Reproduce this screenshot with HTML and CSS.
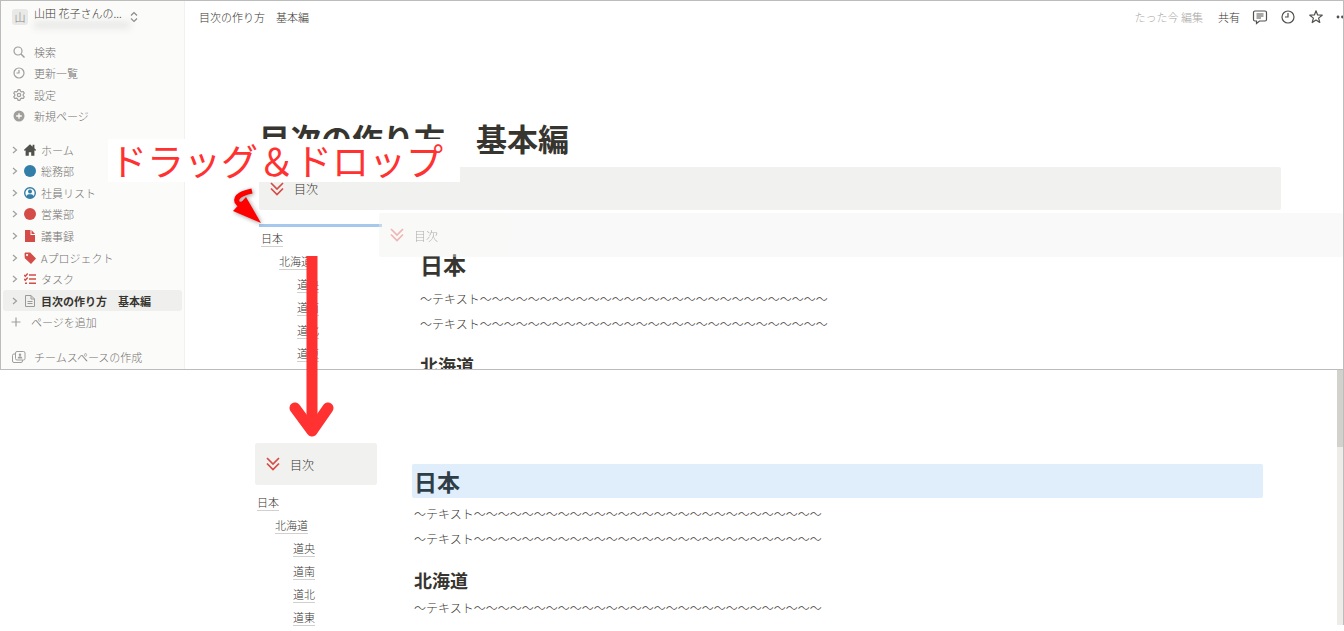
FILE: index.html
```html
<!DOCTYPE html>
<html lang="ja">
<head>
  <meta charset="UTF-8" />
  <meta name="viewport" content="width=device-width, initial-scale=1.0" />
  <title>目次の作り方　基本編</title>
  <link rel="stylesheet" href="styles.css">
</head>
<body>
  <svg class="defs" width="0" height="0" aria-hidden="true">
    <symbol id="chevrons" viewBox="0 0 14 14">
      <path d="M1 1l6 6 6-6M1 6.500l6 6 6-6" fill="none" stroke="currentColor" stroke-width="1.700"/>
    </symbol>
    <symbol id="arrow" viewBox="0 0 8 8">
      <path d="M2 1l3.500 3L2 7" fill="none" stroke="currentColor" stroke-width="1.200"/>
    </symbol>
  </svg>

  <!-- before -->
  <section class="window">
    <aside class="sidebar">
      <button class="workspace" type="button">
        <span class="avatar">山</span>
        <span class="workspace-name">山田 花子さんの...<span class="masked"></span></span>
        <svg class="updown" width="8" height="12" viewBox="0 0 8 12" fill="none" stroke="#8a8a86" stroke-width="1.200"><path d="M1 4.500L4 1.500l3 3M1 7.500l3 3 3-3"/></svg>
      </button>

      <ul class="menu">
        <li><a href="#"><svg width="12" height="12" viewBox="0 0 12 12" fill="none" stroke="currentColor" stroke-width="1.200"><circle cx="5" cy="5" r="4"/><path d="M8 8l3.500 3.500" stroke-width="1.500"/></svg>検索</a></li>
        <li><a href="#"><svg width="12" height="12" viewBox="0 0 12 12" fill="none" stroke="currentColor" stroke-width="1.200"><circle cx="6" cy="6" r="5"/><path d="M6 3v3H3.500"/></svg>更新一覧</a></li>
        <li><a href="#"><svg width="12" height="12" viewBox="0 0 12 12" fill="none" stroke="currentColor" stroke-width="1.200" stroke-linejoin="round"><path d="M5 .7h2l.5 1.500 1.200.7 1.600-.4 1 1.700-1.100 1.200v1.200l1.100 1.200-1 1.700-1.600-.4-1.200.7-.5 1.500H5l-.5-1.500-1.200-.7-1.600.4-1-1.700 1.100-1.200V5.400L.7 4.200l1-1.700 1.600.4 1.200-.7z"/><circle cx="6" cy="6" r="1.700"/></svg>設定</a></li>
        <li><a href="#"><svg width="12" height="12" viewBox="0 0 12 12"><circle cx="6" cy="6" r="5.500" fill="currentColor"/><path d="M6 3.200v5.600M3.200 6h5.600" stroke="#fff" stroke-width="1.300"/></svg>新規ページ</a></li>
      </ul>

      <ul class="pages">
        <li><a href="#"><svg class="arrow"><use href="#arrow"/></svg><svg width="12" height="12" viewBox="0 0 12 12" fill="#50504c"><path d="M6 .2L0 5.800l.7 1.100.9-.7v5.600h3.200V8.300h2.400v3.500h3.200V6.200l.9.700.7-1.100-1.600-1.500V.8H8.600v1.900z"/></svg>ホーム</a></li>
        <li><a href="#"><svg class="arrow"><use href="#arrow"/></svg><svg width="12" height="12" viewBox="0 0 12 12"><circle cx="6" cy="6" r="6" fill="#337ea9"/></svg>総務部</a></li>
        <li><a href="#"><svg class="arrow"><use href="#arrow"/></svg><svg width="12" height="12" viewBox="0 0 12 12"><circle cx="6" cy="6" r="5.300" fill="none" stroke="#337ea9" stroke-width="1.400"/><circle cx="6" cy="4.600" r="2" fill="#337ea9"/><path d="M2.200 9.500C3 7.500 4.500 7.300 6 7.300s3 .2 3.800 2.200C8.500 11 7.500 11.200 6 11.200S3.500 11 2.200 9.500z" fill="#337ea9"/></svg>社員リスト</a></li>
        <li><a href="#"><svg class="arrow"><use href="#arrow"/></svg><svg width="12" height="12" viewBox="0 0 12 12"><circle cx="6" cy="6" r="6" fill="#d44c47"/></svg>営業部</a></li>
        <li><a href="#"><svg class="arrow"><use href="#arrow"/></svg><svg width="12" height="12" viewBox="0 0 12 12" fill="#d44c47"><path d="M1 0h5.500v5H11v7H1z"/><path d="M7.500 0L11 4H7.500z"/></svg>議事録</a></li>
        <li><a href="#"><svg class="arrow"><use href="#arrow"/></svg><svg width="12" height="12" viewBox="0 0 12 12"><path d="M.5 1.500l.8-.9L6.200.500 12 6.600 7 12 .8 6.200zM3 1.900a1 1 0 1 0 .1 0z" fill="#d44c47" fill-rule="evenodd"/></svg>Aプロジェクト</a></li>
        <li><a href="#"><svg class="arrow"><use href="#arrow"/></svg><svg width="12" height="12" viewBox="0 0 12 12" fill="none" stroke="#d44c47" stroke-width="1.500"><path d="M0 2l1.300 1.200L3.700.500M5 2h7M0 6l1.300 1.200 2.400-2.700M5 6h7M1 10.200h2M5 10.200h7"/></svg>タスク</a></li>
        <li><a class="active" href="#"><svg class="arrow"><use href="#arrow"/></svg><svg width="12" height="12" viewBox="0 0 12 12" fill="none" stroke="#9b9a97"><path d="M1.500.500h5.500l3.500 3.500v7.500h-9zM7 .5V4h3.500M3.500 6.500h5M3.500 8.500h5"/></svg>目次の作り方　基本編</a></li>
        <li><a class="add" href="#"><svg width="10" height="10" viewBox="0 0 10 10" stroke="currentColor" stroke-width="1.200"><path d="M5 .5v9M.5 5h9"/></svg>ページを追加</a></li>
      </ul>

      <a class="teamspace" href="#"><svg width="14" height="12" viewBox="0 0 14 12" fill="none" stroke="currentColor"><rect x="3.500" y=".5" width="9.500" height="8.500" rx="1.500"/><path d="M3.500 3H2a1.500 1.500 0 0 0-1.500 1.500V10A1.500 1.500 0 0 0 2 11.500h7a1.500 1.500 0 0 0 1.500-1.500V9"/><circle cx="8" cy="3.700" r="1.200" fill="currentColor" stroke="none"/><path d="M5.700 7.500c0-3 4.600-3 4.600 0z" fill="currentColor" stroke="none"/></svg>チームスペースの作成</a>
    </aside>

    <main class="main">
      <header class="topbar">
        <span class="crumb">目次の作り方　基本編</span>
        <span class="edited">たった今 編集</span>
        <button type="button">共有</button>
        <button type="button" aria-label="コメント"><svg width="16" height="16" viewBox="0 0 16 16" fill="none" stroke="#50504c" stroke-width="1.200"><path d="M3 2h10a1.500 1.500 0 0 1 1.500 1.500v7A1.500 1.500 0 0 1 13 12H7.500L4.500 14.500V12H3a1.500 1.500 0 0 1-1.500-1.500v-7A1.500 1.500 0 0 1 3 2z"/><path d="M4.500 5h7M4.500 7h7M4.500 9h4.500" stroke-width="1"/></svg></button>
        <button type="button" aria-label="更新履歴"><svg width="16" height="16" viewBox="0 0 16 16" fill="none" stroke="#50504c" stroke-width="1.200"><circle cx="8" cy="8" r="6"/><path d="M8 4v4H5"/></svg></button>
        <button type="button" aria-label="お気に入り"><svg width="16" height="16" viewBox="0 0 16 16" fill="none" stroke="#50504c" stroke-width="1.200" stroke-linejoin="round"><path d="M8 1.800l1.600 4.200 4.600.2-3.600 2.900 1.200 4.400L8 11l-3.800 2.500 1.200-4.400L1.800 6.200 6.400 6z"/></svg></button>
        <button type="button" aria-label="その他"><svg width="7" height="16" viewBox="0 0 7 16" fill="#50504c"><circle cx="2" cy="8" r="1.400"/><circle cx="6.500" cy="8" r="1.400"/></svg></button>
      </header>

      <div class="doc">
        <h1>目次の作り方　基本編</h1>
        <div class="callout"><svg class="chevrons"><use href="#chevrons"/></svg>目次</div>
        <div class="columns">
          <nav class="toc">
            <div class="drop-line"></div>
            <a href="#">日本</a>
            <a class="lv2" href="#">北海道</a>
            <a class="lv3" href="#">道央</a>
            <a class="lv3" href="#">道南</a>
            <a class="lv3" href="#">道北</a>
            <a class="lv3" href="#">道東</a>
          </nav>
          <article class="text">
            <h2>日本</h2>
            <p>～テキスト～～～～～～～～～～～～～～～～～～～～～～～～～～～～～</p>
            <p>～テキスト～～～～～～～～～～～～～～～～～～～～～～～～～～～～～</p>
            <h3>北海道</h3>
          </article>
        </div>
      </div>

      <div class="callout ghost"><svg class="chevrons"><use href="#chevrons"/></svg>目次</div>
    </main>
  </section>

  <!-- after -->
  <section class="result">
    <div class="result-side">
      <div class="callout"><svg class="chevrons"><use href="#chevrons"/></svg>目次</div>
      <nav class="toc">
        <a href="#">日本</a>
        <a class="lv2" href="#">北海道</a>
        <a class="lv3" href="#">道央</a>
        <a class="lv3" href="#">道南</a>
        <a class="lv3" href="#">道北</a>
        <a class="lv3" href="#">道東</a>
      </nav>
    </div>
    <article class="result-text">
      <h2 class="selected">日本</h2>
      <p>～テキスト～～～～～～～～～～～～～～～～～～～～～～～～～～～～～</p>
      <p>～テキスト～～～～～～～～～～～～～～～～～～～～～～～～～～～～～</p>
      <h3>北海道</h3>
      <p>～テキスト～～～～～～～～～～～～～～～～～～～～～～～～～～～～～</p>
    </article>
    <div class="scrollbar"><div class="thumb"></div></div>
  </section>

  <!-- notes on top of the screens -->
  <div class="note">ドラッグ＆ドロップ</div>
  <svg class="pointer" width="36" height="42" viewBox="0 0 36 42">
    <path d="M22 5C13 7 5 10 7 16q2 4 8 1" fill="none" stroke="#f00" stroke-width="5"/>
    <path d="M16 11L31 37 3 25z" fill="#f00"/>
  </svg>
  <svg class="down" width="46" height="182" viewBox="0 0 46 182" fill="none" stroke="#ff3131" stroke-width="11">
    <path d="M23 0v170"/>
    <path d="M6 152l17 23 16-23" stroke-linecap="round" stroke-linejoin="round"/>
  </svg>
</body>
</html>
```
FILE: styles.css
```css
* {
  box-sizing: border-box;
}

body {
  position: relative;
  margin: 0;
  background: #fff;
  color: #37352f;
  font-family: 'Noto Sans CJK JP', 'Noto Sans', sans-serif;
  font-size: 11px;
  font-weight: 300;
  overflow-x: hidden;
}

a {
  color: inherit;
  text-decoration: none;
}

button {
  display: flex;
  align-items: center;
  padding: 0;
  border: none;
  background: none;
  color: inherit;
  font: inherit;
  cursor: pointer;
}

ul {
  list-style: none;
  margin: 0;
  padding: 0;
}

svg {
  flex-shrink: 0;
}

h1, h2, h3, p {
  margin: 0;
}

.defs {
  position: absolute;
}

.window {
  display: grid;
  grid-template-columns: 184px 1fr;
  border: 1px solid #bcbcbc;
}

/* sidebar */
.sidebar {
  background: #fbfbfa;
  border-right: 1px solid #f1f1f0;
}

.workspace {
  gap: 6px;
  height: 32px;
  padding-left: 11px;
}

.avatar {
  width: 16px;
  border-radius: 3px;
  background: #e9e9e7;
  line-height: 16px;
  color: #85847f;
}

.workspace-name {
  position: relative;
  width: 90px;
  padding-bottom: 8px;
  line-height: 16px;
  text-align: left;
  white-space: nowrap;
}

.masked {
  position: absolute;
  top: 16px;
  left: 0;
  width: 96px;
  height: 8px;
  background: #e9e9e8;
  filter: blur(3px);
}

.menu,
.pages {
  display: grid;
  grid-auto-rows: 1fr;
}

.menu {
  height: 86px;
  margin-top: 8px;
}

.pages {
  height: 194px;
  margin-top: 12px;
}

.menu a,
.pages a,
.teamspace {
  display: flex;
  align-items: center;
  height: 100%;
  color: #73726e;
  white-space: nowrap;
}

.menu a {
  gap: 9px;
  padding-left: 12px;
}

.menu svg,
.teamspace svg,
.add svg,
.arrow {
  color: #a09f9b;
}

.pages a {
  gap: 5px;
  margin: 0 2px;
  padding-left: 8px;
  border-radius: 3px;
}

.arrow {
  width: 8px;
  height: 8px;
}

.pages .active {
  background: #efefee;
  color: #37352f;
  font-weight: bold;
}

.pages .add {
  gap: 10px;
}

.sidebar .teamspace {
  gap: 8px;
  height: 22px;
  margin-top: 13px;
  margin-bottom: 1px;
  padding-left: 11px;
}

/* the page only fills the height that the sidebar gives it */
.main {
  position: relative;
  contain: size;
  overflow: hidden;
}

.topbar {
  display: flex;
  align-items: center;
  gap: 12px;
  height: 32px;
  padding-left: 14px;
}

.edited {
  margin-left: auto;
  color: #a8a7a3;
}

.topbar .edited + button {
  margin-left: 3px;
}

.doc {
  padding: 83px 62px 0 74px;
}

h1 {
  font-size: 31px;
  line-height: 44px;
}

h2 {
  font-size: 23px;
  line-height: 34px;
}

h3 {
  font-size: 18px;
  line-height: 26px;
}

p {
  font-size: 12px;
  line-height: 25px;
  white-space: nowrap;
}

.callout {
  display: flex;
  align-items: center;
  gap: 10px;
  height: 43px;
  padding-left: 11px;
  border-radius: 2px;
  background: #f1f1ef;
  font-size: 12px;
}

.doc .callout {
  margin-top: 7px;
}

.chevrons {
  width: 14px;
  height: 14px;
  color: #d44c47;
}

.ghost {
  position: absolute;
  top: 212px;
  left: 194px;
  right: 0;
  height: 44px;
  opacity: 0.4;
}

.columns {
  display: grid;
  grid-template-columns: 123px 1fr;
  gap: 38px;
}

.toc {
  display: flex;
  flex-direction: column;
  align-items: flex-start;
  gap: 7px;
  line-height: 15px;
}

.toc a {
  height: 16px;
  margin-left: 2px;
  border-bottom: 1px solid #d0d0ce;
}

.toc .lv2 {
  margin-left: 20px;
}

.toc .lv3 {
  margin-left: 38px;
}

.drop-line {
  align-self: stretch;
  height: 3px;
  margin-top: 14px;
  margin-bottom: -3px;
  background: #a6c8ec;
}

.text {
  padding-top: 37px;
}

.text h2 {
  margin-bottom: 5px;
}

.text h3 {
  margin-top: 16px;
}

/* result */
.result {
  display: grid;
  grid-template-columns: 122px 1fr 7px;
  padding-left: 255px;
}

.result-side {
  padding-top: 73px;
}

.result-side .callout {
  height: 42px;
}

.result-side .toc {
  margin-top: 10px;
}

.result-text {
  padding: 94px 74px 0 35px;
}

.result-text p,
.result-text h3 {
  padding-left: 2px;
}

.result-text h3 {
  margin-top: 16px;
}

.result-text h3 + p {
  margin-top: 2px;
}

.result-text .selected {
  margin-bottom: 3px;
  padding-left: 2px;
  border-radius: 2px;
  background: #e0edfa;
  color: #2f3d47;
}

.scrollbar {
  margin-bottom: 1px;
  border-right: 1px solid #bcbcbc;
  background: #edece9;
}

.thumb {
  height: 77px;
  background: #d3d1cb;
}

/* notes */
.note {
  position: absolute;
  top: 139px;
  left: 108px;
  width: 352px;
  padding-left: 2px;
  background: #fff;
  color: #ff3131;
  font-size: 37px;
  font-weight: 400;
  line-height: 43px;
  white-space: nowrap;
}

.pointer {
  position: absolute;
  top: 186px;
  left: 230px;
  filter: drop-shadow(1px 1px 2px rgba(0, 0, 0, 0.4));
}

.down {
  position: absolute;
  top: 256px;
  left: 289px;
}
```
